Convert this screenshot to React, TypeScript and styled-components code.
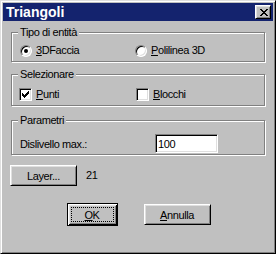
import React from "react";
import styled, { createGlobalStyle } from "styled-components";

const Global = createGlobalStyle`
  html, body { margin: 0; padding: 0; background: #c0c0c0; }
  body { font-family: "Liberation Sans", Arial, sans-serif; font-size: 11px; color: #000; }
  * { box-sizing: border-box; }
`;

const Window = styled.div`
  width: 276px;
  height: 254px;
  background: #c0c0c0;
  border: 1px solid;
  border-color: #dfdfdf #000 #000 #dfdfdf;
  box-shadow: inset 1px 1px #fff, inset -1px -1px #808080;
  padding: 2px;
  display: flex;
  flex-direction: column;
`;

const TitleBar = styled.div`
  height: 18px;
  flex: none;
  background: #14236e;
  display: flex;
  align-items: center;
  padding: 0 2px 0 3px;
`;

const TitleText = styled.div`
  flex: 1;
  color: #fff;
  font-weight: bold;
  font-size: 14px;
  line-height: 18px;
`;

const CaptionButton = styled.div`
  width: 16px;
  height: 14px;
  background: #c0c0c0;
  border: 1px solid;
  border-color: #fff #000 #000 #fff;
  box-shadow: inset 1px 1px #dfdfdf, inset -1px -1px #808080;
  display: flex;
  align-items: center;
  justify-content: center;
  padding-left: 1px;
`;

const Client = styled.div`
  flex: 1;
  display: flex;
  flex-direction: column;
  padding: 11px 7px 0 8px;
  letter-spacing: -0.4px;
`;

const Group = styled.div<{ $mt?: number; $pl: number; $pt: number; $pb: number }>`
  position: relative;
  margin-top: ${(p) => p.$mt ?? 0}px;
  margin-right: 1px;
  border: 1px solid #808080;
  box-shadow: inset 1px 1px #fff, 1px 1px #fff;
  padding: ${(p) => `${p.$pt}px 8px ${p.$pb}px ${p.$pl}px`};
`;

const GroupLabel = styled.div`
  position: absolute;
  top: -7px;
  left: 6px;
  height: 13px;
  line-height: 13px;
  padding: 0 2px;
  background: #c0c0c0;
`;

const OptionRow = styled.div<{ $col: number }>`
  display: grid;
  grid-template-columns: ${(p) => p.$col}px auto;
  align-items: center;
`;

const Option = styled.label`
  display: flex;
  align-items: center;
  gap: 4px;
  height: 13px;
  line-height: 13px;
`;

const Accel = styled.span`
  text-decoration: underline;
  text-underline-offset: 1px;
`;

const RadioCircle = styled.span<{ $checked?: boolean }>`
  position: relative;
  width: 12px;
  height: 12px;
  flex: none;
  border-radius: 50%;
  border: 1px solid;
  border-color: #808080 #fff #fff #808080;
  background: #fff;
  box-shadow: inset 1px 1px #000, inset -1px -1px #dfdfdf;
  &::after {
    content: "";
    display: ${(p) => (p.$checked ? "block" : "none")};
    position: absolute;
    left: 3px;
    top: 3px;
    width: 4px;
    height: 4px;
    border-radius: 50%;
    background: #000;
  }
`;

const CheckBox = styled.span`
  width: 13px;
  height: 13px;
  flex: none;
  border: 1px solid;
  border-color: #808080 #fff #fff #808080;
  background: #fff;
  box-shadow: inset 1px 1px #000, inset -1px -1px #dfdfdf;
  display: flex;
  align-items: center;
  justify-content: center;
`;

const FieldRow = styled.div`
  display: grid;
  grid-template-columns: 135px 63px;
  align-items: center;
`;

const TextField = styled.input`
  width: 63px;
  height: 19px;
  border: 1px solid;
  border-color: #808080 #fff #fff #808080;
  box-shadow: inset 1px 1px #000, inset -1px -1px #dfdfdf;
  background: #fff;
  padding: 0 2px;
  font: inherit;
  letter-spacing: -0.4px;
  color: #000;
  outline: none;
`;

const LayerRow = styled.div`
  display: flex;
  align-items: center;
  gap: 9px;
  margin-top: 10px;
  margin-left: -1px;
`;

const ButtonRow = styled.div`
  display: flex;
  align-items: center;
  justify-content: center;
  gap: 26px;
  margin-top: 17px;
`;

const Button = styled.button<{ $w: number; $default?: boolean }>`
  width: ${(p) => p.$w}px;
  height: ${(p) => (p.$default ? 23 : 21)}px;
  padding: 0;
  margin: 0;
  background: #c0c0c0;
  font: inherit;
  letter-spacing: -0.4px;
  color: #000;
  display: flex;
  align-items: stretch;
  justify-content: center;
  border: 1px solid;
  border-color: ${(p) => (p.$default ? "#000" : "#fff #000 #000 #fff")};
  box-shadow: ${(p) =>
    p.$default
      ? "inset 1px 1px #fff, inset -1px -1px #000, inset 2px 2px #dfdfdf, inset -2px -2px #808080"
      : "inset 1px 1px #dfdfdf, inset -1px -1px #808080"};
`;

const ButtonFace = styled.span<{ $focus?: boolean }>`
  flex: 1;
  display: flex;
  align-items: center;
  justify-content: center;
  margin: ${(p) => (p.$focus ? "3px" : "0")};
  border: ${(p) => (p.$focus ? "1px dotted #000" : "none")};
`;

const Value = styled.span`
  line-height: 13px;
`;

const CloseGlyph = () => (
  <svg width="8" height="7" viewBox="0 0 8 7" shapeRendering="crispEdges">
    <path
      fill="#000"
      d="M0 0h2v1h-2zM6 0h2v1h-2zM1 1h2v1h-2zM5 1h2v1h-2zM2 2h4v1h-4zM3 3h2v1h-2zM2 4h4v1h-4zM1 5h2v1h-2zM5 5h2v1h-2zM0 6h2v1h-2zM6 6h2v1h-2z"
    />
  </svg>
);

const CheckMark = () => (
  <svg width="7" height="7" viewBox="0 0 7 7" shapeRendering="crispEdges">
    <path
      fill="#000"
      d="M6 0h1v1h-1zM5 1h2v1h-2zM0 2h1v1h-1zM4 2h3v1h-3zM0 3h2v1h-2zM3 3h3v1h-3zM0 4h5v1h-5zM1 5h3v1h-3zM2 6h1v1h-1z"
    />
  </svg>
);

export default function App() {
  return (
    <>
      <Global />
      <Window>
        <TitleBar>
          <TitleText>Triangoli</TitleText>
          <CaptionButton>
            <CloseGlyph />
          </CaptionButton>
        </TitleBar>
        <Client>
          <Group $pl={8} $pt={11} $pb={4}>
            <GroupLabel>Tipo di entità</GroupLabel>
            <OptionRow $col={115}>
              <Option>
                <RadioCircle $checked />
                <span>
                  <Accel>3</Accel>DFaccia
                </span>
              </Option>
              <Option>
                <RadioCircle />
                <span>
                  <Accel>P</Accel>olilinea 3D
                </span>
              </Option>
            </OptionRow>
          </Group>
          <Group $mt={12} $pl={7} $pt={13} $pb={4}>
            <GroupLabel>Selezionare</GroupLabel>
            <OptionRow $col={117}>
              <Option>
                <CheckBox>
                  <CheckMark />
                </CheckBox>
                <span>
                  <Accel>P</Accel>unti
                </span>
              </Option>
              <Option>
                <CheckBox />
                <span>
                  <Accel>B</Accel>locchi
                </span>
              </Option>
            </OptionRow>
          </Group>
          <Group $mt={14} $pl={8} $pt={13} $pb={1}>
            <GroupLabel>Parametri</GroupLabel>
            <FieldRow>
              <span>Dislivello max.:</span>
              <TextField readOnly value="100" />
            </FieldRow>
          </Group>
          <LayerRow>
            <Button $w={67}>
              <ButtonFace>Layer...</ButtonFace>
            </Button>
            <Value>21</Value>
          </LayerRow>
          <ButtonRow>
            <Button $w={51} $default>
              <ButtonFace $focus>
                <Accel>O</Accel>K
              </ButtonFace>
            </Button>
            <Button $w={67}>
              <ButtonFace>
                <Accel>A</Accel>nnulla
              </ButtonFace>
            </Button>
          </ButtonRow>
        </Client>
      </Window>
    </>
  );
}
